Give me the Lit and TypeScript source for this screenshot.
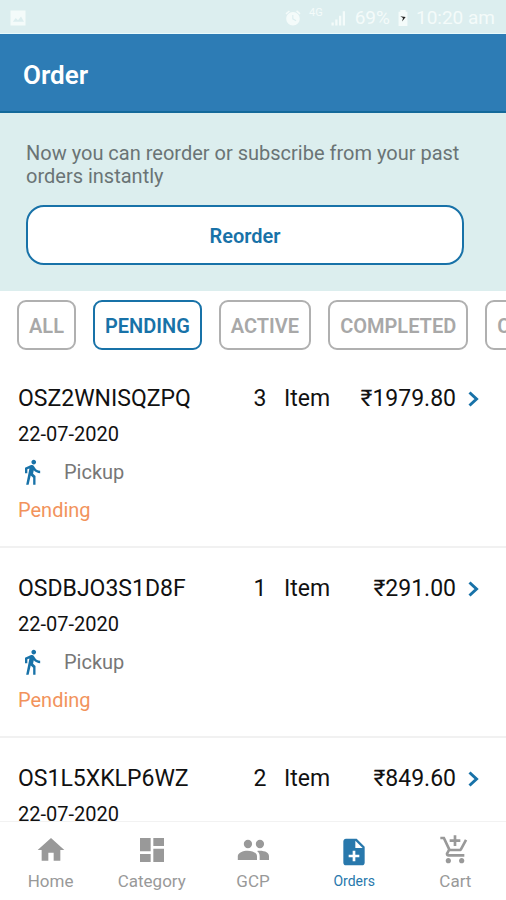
import { LitElement, html, svg, css, nothing } from "lit";
import { customElement, state } from "lit/decorators.js";
import { classMap } from "lit/directives/class-map.js";

interface Order {
  code: string;
  items: number;
  price: string;
  date: string;
  method: string;
  status: string;
}

const orders: Order[] = [
  { code: "OSZ2WNISQZPQ", items: 3, price: "1979.80", date: "22-07-2020", method: "Pickup", status: "Pending" },
  { code: "OSDBJO3S1D8F", items: 1, price: "291.00", date: "22-07-2020", method: "Pickup", status: "Pending" },
  { code: "OS1L5XKLP6WZ", items: 2, price: "849.60", date: "22-07-2020", method: "Pickup", status: "Pending" },
];

const filters = ["ALL", "PENDING", "ACTIVE", "COMPLETED", "CANCELLED"];

const paths: Record<string, string> = {
  home: "M10 20v-6h4v6h5v-8h3L12 3 2 12h3v8z",
  category: "M3 13h8V3H3v10zm0 8h8v-6H3v6zm10 0h8V11h-8v10zm0-18v6h8V3h-8z",
  group:
    "M8.2 4.4a3.1 3.1 0 1 1 0 6.2 3.1 3.1 0 0 1 0-6.2zM17.2 4.4a3.1 3.1 0 1 1 0 6.2 3.1 3.1 0 0 1 0-6.2zM8 12.5C4.500 12.500.6 14 .6 16.600V19.500H15V16.600C15 14 11.500 12.500 8 12.500zM15 12.700c1.300.9 2 2.200 2 3.900v2.900h7v-2.900c0-2.600-3.200-4.400-9-3.900z",
  orders:
    "M14 2H6c-1.1 0-2 .9-2 2v16c0 1.1.9 2 2 2h12c1.1 0 2-.9 2-2V8l-6-6zm2 14h-3v3h-2v-3H8v-2h3v-3h2v3h3v2zm-3-7V3.5L18.5 9H13z",
  cart:
    "M11 9h2V6h3V4h-3V1h-2v3H8v2h3v3zm-4 9c-1.1 0-1.99.9-1.99 2S5.9 22 7 22s2-.9 2-2-.9-2-2-2zm10 0c-1.1 0-1.99.9-1.99 2s.89 2 1.99 2 2-.9 2-2-.9-2-2-2zm-9.83-3.25l.03-.12.9-1.63h7.45c.75 0 1.41-.41 1.75-1.03l3.86-7.01L19.42 4h-.01l-1.1 2-2.76 5H8.53l-.13-.27L6.16 6l-.95-2-.94-2H1v2h2l3.6 7.59-1.35 2.45c-.16.28-.25.61-.25.96 0 1.1.9 2 2 2h12v-2H7.42c-.13 0-.25-.11-.25-.25z",
  walk:
    "M13.5 5.5c1.1 0 2-.9 2-2s-.9-2-2-2-2 .9-2 2 .9 2 2 2zM9.8 8.9L7 23h2.1l1.8-8 2.1 2v6h2v-7.5l-2.1-2 .6-3C14.8 12 16.8 13 19 13v-2c-1.9 0-3.5-1-4.3-2.4l-1-1.6c-.4-.6-1-1-1.7-1-.3 0-.5.1-.8.1L6 8.3V13h2V9.6l1.8-.7",
  picture: "M22 2H2v20h20V2zM5 17l4-5 3 3 4-5 4 7H5z",
  alarm:
    "M22 5.7l-4.6-3.9-1.3 1.5 4.6 3.9L22 5.7zM7.9 3.4L6.6 1.9 2 5.700l1.3 1.5 4.6-3.8zM12 4c-5 0-9 4-9 9s4 9 9 9 9-4 9-9-4-9-9-9zm.5 4v4.7l4 2.4-.8 1.2L11 13.5V8h1.5z",
  signal: "M2 22h3v-4H2v4zm5 0h3v-8H7v8zm5 0h3V9h-3v13zm5 0h3V3h-3v19z",
};

const icon = (name: string, cls = "") => html`
  <svg class="icon ${cls}" viewBox="0 0 24 24" aria-hidden="true">${svg`<path d=${paths[name]} />`}</svg>
`;

const tabs = [
  { label: "Home", icon: "home" },
  { label: "Category", icon: "category" },
  { label: "GCP", icon: "group" },
  { label: "Orders", icon: "orders" },
  { label: "Cart", icon: "cart" },
];

@customElement("app-root")
export class AppRoot extends LitElement {
  static styles = css`
    :host {
      display: flex;
      flex-direction: column;
      height: 100vh;
      overflow: hidden;
      background: #fff;
      color: #111;
      font-family: Roboto, "Noto Sans", sans-serif;
      font-size: 20px;
      line-height: 24px;
      --blue: #1872a8;
    }
    * {
      box-sizing: border-box;
    }
    button {
      font: inherit;
      cursor: pointer;
    }
    a {
      color: inherit;
      text-decoration: none;
    }
    .icon {
      display: block;
      flex: none;
      width: 24px;
      height: 24px;
      fill: currentColor;
    }
    .status {
      display: flex;
      flex: none;
      align-items: center;
      gap: 7px;
      height: 34px;
      padding: 3px 11px 0 9px;
      background: #dceeef;
      color: #f4fbfa;
      font-size: 19px;
      border-bottom: 1px solid #e8fafc;
    }
    .status .icon {
      width: 18px;
      height: 18px;
    }
    .spacer {
      flex: 1;
    }
    .network {
      align-self: flex-start;
      font-size: 11px;
      line-height: 20px;
    }
    .battery {
      width: 12px;
      height: 16px;
    }
    .bolt {
      fill: #222;
    }
    .title {
      display: flex;
      flex: none;
      align-items: center;
      height: 79px;
      padding: 4px 23px 0;
      background: #2d7cb5;
      border-bottom: 2px solid #14699a;
      color: #fff;
    }
    .title h1 {
      margin: 0;
      font-size: 26px;
      font-weight: 600;
      line-height: 32px;
    }
    .promo {
      flex: none;
      padding: 29px 42px 26px 26px;
      background: #dceeee;
    }
    .promo p {
      margin: 0 0 17px;
      color: #6a7475;
      line-height: 23px;
    }
    .reorder {
      display: block;
      width: 100%;
      height: 60px;
      padding: 2px 0 0;
      border: 2px solid var(--blue);
      border-radius: 18px;
      background: #fff;
      color: var(--blue);
      font-weight: 600;
    }
    .filters {
      display: flex;
      flex: none;
      gap: 17px;
      padding: 9px 17px 8px;
      overflow: hidden;
    }
    .chip {
      flex: none;
      height: 50px;
      padding: 2px 10px 0;
      border: 2px solid #b0b0b0;
      border-radius: 9px;
      background: #fff;
      color: #a8a8a8;
      font-weight: 600;
    }
    .chip.selected {
      border-color: var(--blue);
      color: var(--blue);
    }
    .orders {
      flex: 1;
      min-height: 0;
      margin: 0;
      padding: 0;
      overflow: hidden;
      list-style: none;
    }
    .order {
      padding: 27px 18px 24px;
      border-bottom: 2px solid #f1f1f1;
    }
    .summary {
      display: grid;
      grid-template-columns: 1fr 24px 48px 112px 20px;
      column-gap: 12px;
      align-items: center;
      margin-bottom: 9px;
      font-size: 23px;
      line-height: 28px;
    }
    .count {
      text-align: center;
    }
    .price {
      text-align: right;
    }
    .open {
      color: var(--blue);
    }
    .chevron {
      display: block;
      width: 11px;
      height: 16px;
      fill: none;
      stroke: currentColor;
      stroke-width: 3;
    }
    .method {
      display: flex;
      align-items: center;
      gap: 20px;
      margin: 14px 0;
      color: #777;
    }
    .walk {
      width: 28px;
      height: 28px;
      margin: -2px -2px -2px 0;
      color: var(--blue);
    }
    .state {
      color: #f2935c;
    }
    .tabs {
      display: grid;
      flex: none;
      grid-template-columns: repeat(5, 1fr);
      height: 79px;
      border-top: 1px solid #f2f2f2;
      background: #fff;
      color: #999;
      font-size: 17px;
    }
    .tab {
      display: flex;
      flex-direction: column;
      align-items: center;
      gap: 3px;
      padding-top: 12px;
    }
    .tab .icon {
      width: 32px;
      height: 32px;
    }
    .tab.current {
      gap: 1px;
      padding-top: 14px;
      color: #2878ac;
      font-size: 14px;
    }
  `;

  @state() private filter = "PENDING";
  @state() private tab = "Orders";

  private renderOrder(o: Order) {
    return html`
      <li class="order">
        <div class="summary">
          <span>${o.code}</span>
          <span class="count">${o.items}</span>
          <span>Item</span>
          <span class="price">₹${o.price}</span>
          <a class="open" href="#${o.code}" aria-label="Open order ${o.code}">
            <svg class="chevron" viewBox="0 0 11 16" aria-hidden="true"><path d="M1.500 1.500 8.500 8l-7 6.500" /></svg>
          </a>
        </div>
        <div>${o.date}</div>
        <div class="method">${icon("walk", "walk")}<span>${o.method}</span></div>
        <div class="state">${o.status}</div>
      </li>
    `;
  }

  render() {
    return html`
      <div class="status">
        ${icon("picture")}
        <span class="spacer"></span>
        ${icon("alarm")}
        <span class="network">4G</span>
        ${icon("signal")}
        <span>69%</span>
        <svg class="battery" viewBox="0 0 12 18" aria-hidden="true">
          <path fill="currentColor" d="M3 2V0h6v2h2v16H1V2z" />
          <path class="bolt" d="M3 7l6 1-4 5 1-4z" />
        </svg>
        <span>10:20 am</span>
      </div>
      <header class="title"><h1>Order</h1></header>
      <section class="promo">
        <p>Now you can reorder or subscribe from your past orders instantly</p>
        <button class="reorder">Reorder</button>
      </section>
      <div class="filters">
        ${filters.map(
          (f) => html`<button
            class=${classMap({ chip: true, selected: f === this.filter })}
            aria-pressed=${f === this.filter}
            @click=${() => (this.filter = f)}
          >${f}</button>`
        )}
      </div>
      <ul class="orders">${orders.map((o) => this.renderOrder(o))}</ul>
      <nav class="tabs">
        ${tabs.map(
          (t) => html`<a
            class=${classMap({ tab: true, current: t.label === this.tab })}
            href="#${t.label.toLowerCase()}"
            aria-current=${t.label === this.tab ? "page" : nothing}
            @click=${() => (this.tab = t.label)}
          >${icon(t.icon)}<span>${t.label}</span></a>`
        )}
      </nav>
    `;
  }
}
